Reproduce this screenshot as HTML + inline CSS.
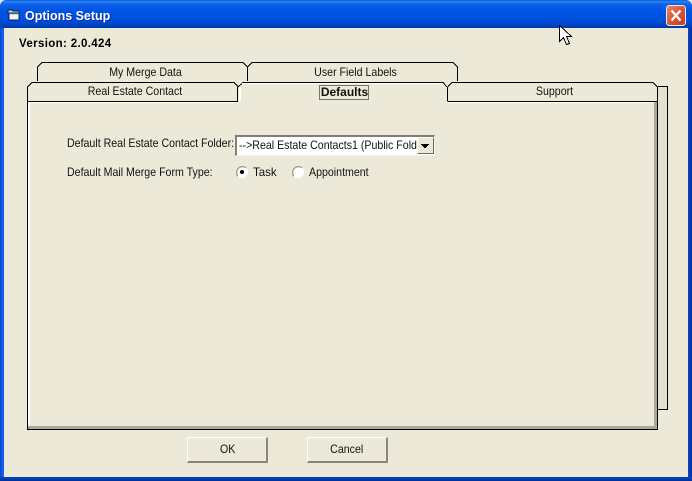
<!DOCTYPE html>
<html>
<head>
<meta charset="utf-8">
<style>
html,body{margin:0;padding:0;background:#ece9d8;}
#w{position:relative;width:692px;height:481px;overflow:hidden;background:#ece9d8;font-family:"Liberation Sans",sans-serif;font-size:12px;color:#111;}
.t{position:absolute;white-space:nowrap;line-height:14px;transform:scaleX(.885);transform-origin:left center;}
.c{text-align:center;transform-origin:center center;}
#tb{position:absolute;left:0;top:0;width:692px;height:28px;background:linear-gradient(to bottom,#0a5be0 0,#2a85f5 2px,#0f62e8 4px,#0055e5 10px,#0050de 20px,#0044c4 25px,#003aa8 28px);border-radius:6px 6px 0 0;}
.bl{position:absolute;top:28px;width:4px;height:453px;}
.btn{position:absolute;top:437px;width:78px;height:23px;background:#ece9d8;border-top:1px solid #fff;border-left:1px solid #fff;border-right:2px solid #8a8778;border-bottom:2px solid #8a8778;box-sizing:content-box;text-align:center;line-height:22px;}
.btn span{display:inline-block;transform:scaleX(.885);}
</style>
</head>
<body>
<div id="w">
<div id="tb"></div>
<div class="bl" style="left:0;background:linear-gradient(to right,#0048d0,#0a5ae8 2px,#1a6af0 3px,#0a4fd0);"></div>
<div class="bl" style="left:688px;background:linear-gradient(to right,#0a3fc0,#0a3fb8 2px,#002a9c);"></div>
<div style="position:absolute;left:0;top:477px;width:692px;height:4px;background:linear-gradient(to bottom,#0a45c4,#00309c);"></div>

<svg style="position:absolute;left:7px;top:9px" width="14" height="14" viewBox="0 0 14 14">
<path d="M1 1h4l1 1h6v2H1z" fill="#bcd8ea" stroke="#10204a" stroke-width="1"/>
<path d="M2 4h10v7H2z" fill="#f4f6f8" stroke="#10204a" stroke-width="1"/>
<path d="M3 5h8" stroke="#9ab" stroke-width="1"/>
</svg>
<div class="t" style="left:25px;top:8px;color:#fff;font-weight:bold;font-size:13px;line-height:16px;text-shadow:1px 1px 0 #0a2f90;transform:scaleX(.96);">Options Setup</div>

<svg style="position:absolute;left:666px;top:5px" width="20" height="21" viewBox="0 0 20 21">
<defs><linearGradient id="r" x1="0" y1="0" x2="1" y2="1"><stop offset="0" stop-color="#e88a68"/><stop offset=".5" stop-color="#d8583a"/><stop offset="1" stop-color="#c03a20"/></linearGradient></defs>
<rect x=".5" y=".5" width="19" height="20" rx="3" fill="url(#r)" stroke="#f0ece8"/>
<path d="M5.500 5.500l9 10M14.500 5.500l-9 10" stroke="#fff" stroke-width="2.200"/>
</svg>

<div class="t" style="left:19px;top:37px;font-weight:bold;font-size:11.500px;letter-spacing:.35px;color:#000;transform:none;">Version: 2.0.424</div>

<svg style="position:absolute;left:0;top:0" width="692" height="481" viewBox="0 0 692 481" shape-rendering="crispEdges">
<!-- right stack edge -->
<path d="M658 86H667V409H658z" fill="#e4e1d0" stroke="none"/>
<path d="M658 86.500H667.500V409.500H658" fill="none" stroke="#000"/>
<!-- back row tabs -->
<path d="M37.500 81V67L42 62.500H243L247.500 67V81" fill="#ece9d8" stroke="#000"/>
<path d="M247.500 81V67L252 62.500H453L457.500 67V81" fill="#ece9d8" stroke="#000"/>
<!-- panel -->
<rect x="27" y="101" width="631" height="330" fill="#ece9d8"/>
<rect x="28" y="102" width="2" height="327" fill="#fff"/>
<rect x="654" y="102" width="3" height="327" fill="#aca899"/>
<rect x="28" y="426" width="629" height="3" fill="#aca899"/>
<path d="M27.500 101V429.500H657.500V101" fill="none" stroke="#000"/>
<!-- front row tabs -->
<path d="M27.500 102V87L32 82.500H234L238.500 87V101.500H27.500z" fill="#ece9d8" stroke="#000"/>
<path d="M447.500 101.500V87L452 82.500H653L657.500 87V101.500z" fill="#ece9d8" stroke="#000"/>
<path d="M238 101V87L243 82H443L448 87V102H238z" fill="#ece9d8"/>
<path d="M237.500 101.500V87.500L243 82.500H443L447.500 87.500V101.500" fill="none" stroke="#000"/>
<rect x="239" y="87" width="2" height="16" fill="#fff"/>
<rect x="242" y="83" width="200" height="1" fill="#fff"/>
<rect x="445" y="87" width="2" height="14" fill="#ece9d8"/>
<rect x="238" y="101" width="209" height="3" fill="#ece9d8"/>
<rect x="30" y="102" width="208" height="1" fill="#fff"/>
<rect x="448" y="102" width="206" height="1" fill="#fff"/>
<!-- focus box -->
<rect x="319.500" y="85.500" width="49" height="14" fill="none" stroke="#000" stroke-dasharray="1 1"/>
</svg>

<div class="t c" style="left:40px;top:65px;width:211px;">My Merge Data</div>
<div class="t c" style="left:250px;top:65px;width:211px;">User Field Labels</div>
<div class="t c" style="left:29px;top:84px;width:212px;">Real Estate Contact</div>
<div class="t c" style="left:240px;top:85px;width:209px;font-weight:bold;transform:none;">Defaults</div>
<div class="t c" style="left:447px;top:84px;width:215px;">Support</div>

<div class="t" style="left:67px;top:136px;">Default Real Estate Contact Folder:</div>
<div class="t" style="left:67px;top:165px;">Default Mail Merge Form Type:</div>

<!-- combo -->
<div style="position:absolute;left:235px;top:135px;width:200px;height:21px;box-sizing:border-box;background:#fff;border-top:2px solid #808078;border-left:2px solid #808078;border-right:1px solid #f4f2ea;border-bottom:1px solid #f4f2ea;"></div>
<div class="t" style="left:239px;top:138px;">--&gt;Real Estate Contacts1 (Public Fold</div>
<div style="position:absolute;left:417px;top:137px;width:17px;height:17px;box-sizing:border-box;background:#ece9d8;border-top:1px solid #fff;border-left:1px solid #fff;border-right:1px solid #6a6a60;border-bottom:1px solid #6a6a60;"></div>
<svg style="position:absolute;left:417px;top:137px" width="17" height="17" shape-rendering="crispEdges"><path d="M4 7h8v1H4zM5 8h6v1H5zM6 9h4v1H6zM7 10h2v1H7z" fill="#000"/></svg>

<!-- radios -->
<svg style="position:absolute;left:235px;top:165px" width="14" height="14" viewBox="0 0 14 14">
<circle cx="7" cy="7" r="6" fill="#fff"/>
<path d="M2.800 11.200A6 6 0 0 1 11.200 2.800" fill="none" stroke="#9a9888" stroke-width="1.200"/>
<circle cx="7" cy="7" r="2" fill="#000"/>
</svg>
<div class="t" style="left:253px;top:165px;transform:scaleX(.96);">Task</div>
<svg style="position:absolute;left:291px;top:165px" width="14" height="14" viewBox="0 0 14 14">
<circle cx="7" cy="7" r="6" fill="#fff"/>
<path d="M2.800 11.200A6 6 0 0 1 11.200 2.800" fill="none" stroke="#9a9888" stroke-width="1.200"/>
</svg>
<div class="t" style="left:309px;top:165px;">Appointment</div>

<div class="btn" style="left:187px;"><span style="position:relative;left:1px;">OK</span></div>
<div class="btn" style="left:307px;"><span>Cancel</span></div>

<!-- cursor -->
<svg style="position:absolute;left:559px;top:25px" width="14" height="22" viewBox="0 0 14 22" shape-rendering="crispEdges">
<path d="M.5 .5V16.500L4.500 12.500L7.500 19.500L10.500 18.500L7.500 11.500H12.500z" fill="#fff" stroke="#000"/>
</svg>
</div>
</body>
</html>
